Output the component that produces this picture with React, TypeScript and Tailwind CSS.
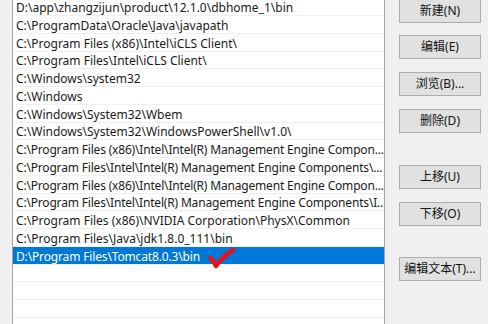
import React from "react";

const rows = [
  "D:\\app\\zhangzijun\\product\\12.1.0\\dbhome_1\\bin",
  "C:\\ProgramData\\Oracle\\Java\\javapath",
  "C:\\Program Files (x86)\\Intel\\iCLS Client\\",
  "C:\\Program Files\\Intel\\iCLS Client\\",
  "C:\\Windows\\system32",
  "C:\\Windows",
  "C:\\Windows\\System32\\Wbem",
  "C:\\Windows\\System32\\WindowsPowerShell\\v1.0\\",
  "C:\\Program Files (x86)\\Intel\\Intel(R) Management Engine Compon...",
  "C:\\Program Files\\Intel\\Intel(R) Management Engine Components\\...",
  "C:\\Program Files (x86)\\Intel\\Intel(R) Management Engine Compon...",
  "C:\\Program Files\\Intel\\Intel(R) Management Engine Components\\I...",
  "C:\\Program Files (x86)\\NVIDIA Corporation\\PhysX\\Common",
  "C:\\Program Files\\Java\\jdk1.8.0_111\\bin",
  "D:\\Program Files\\Tomcat8.0.3\\bin",
  "",
  "",
  "",
  "",
];

function Btn({ label, className = "" }: { label: string; className?: string }) {
  return (
    <div
      className={
        "w-[82px] h-[24px] flex items-center justify-center bg-[#e1e1e1] border border-[#adadad] text-[12px] text-[#111] " +
        className
      }
    >
      {label}
    </div>
  );
}

export default function App() {
  return (
    <div
      className="w-[488px] h-[324px] overflow-hidden flex bg-[#f0f0f0]"
      style={{ fontFamily: '"Noto Sans", "Noto Sans CJK SC", sans-serif' }}
    >
      <div className="w-[12px] shrink-0" />
      <div className="w-[373px] shrink-0 bg-white border-l border-r border-[#a6a6a6] overflow-hidden relative">
        <div className="-mt-[1.76px] flex flex-col">
          {rows.map((r, i) => (
            <div
              key={i}
              className={
                "h-[17.76px] shrink-0 flex items-center pl-[3px] text-[12px] leading-none whitespace-nowrap border-b border-[#f0f0f0] " +
                (i === 14 ? "bg-[#0078d7] text-white tracking-[-0.15px] " : "text-[#1a1a1a] ") +
                (r.includes("Management") ? "tracking-[-0.18px]" : "")
              }
            >
              <span className="pt-[3px]">{r}</span>
            </div>
          ))}
        </div>
        <svg
          className="absolute left-[182px] top-[246px]"
          width="46"
          height="26"
          viewBox="0 0 46 26"
        >
          <path
            d="M15 12 C17 13 19 16 21 20 C26 13 31 8 38 4"
            fill="none"
            stroke="#e8101a"
            strokeWidth="4.5"
            strokeLinecap="round"
            strokeLinejoin="round"
          />
        </svg>
      </div>
      <div className="flex-1 flex flex-col pl-[14px] -mt-[1.5px]">
        <Btn label="新建(N)" />
        <Btn label="编辑(E)" className="mt-[12.5px]" />
        <Btn label="浏览(B)..." className="mt-[13px]" />
        <Btn label="删除(D)" className="mt-[13px]" />
        <Btn label="上移(U)" className="mt-[32px]" />
        <Btn label="下移(O)" className="mt-[13px]" />
        <Btn label="编辑文本(T)..." className="mt-[31px]" />
      </div>
    </div>
  );
}
